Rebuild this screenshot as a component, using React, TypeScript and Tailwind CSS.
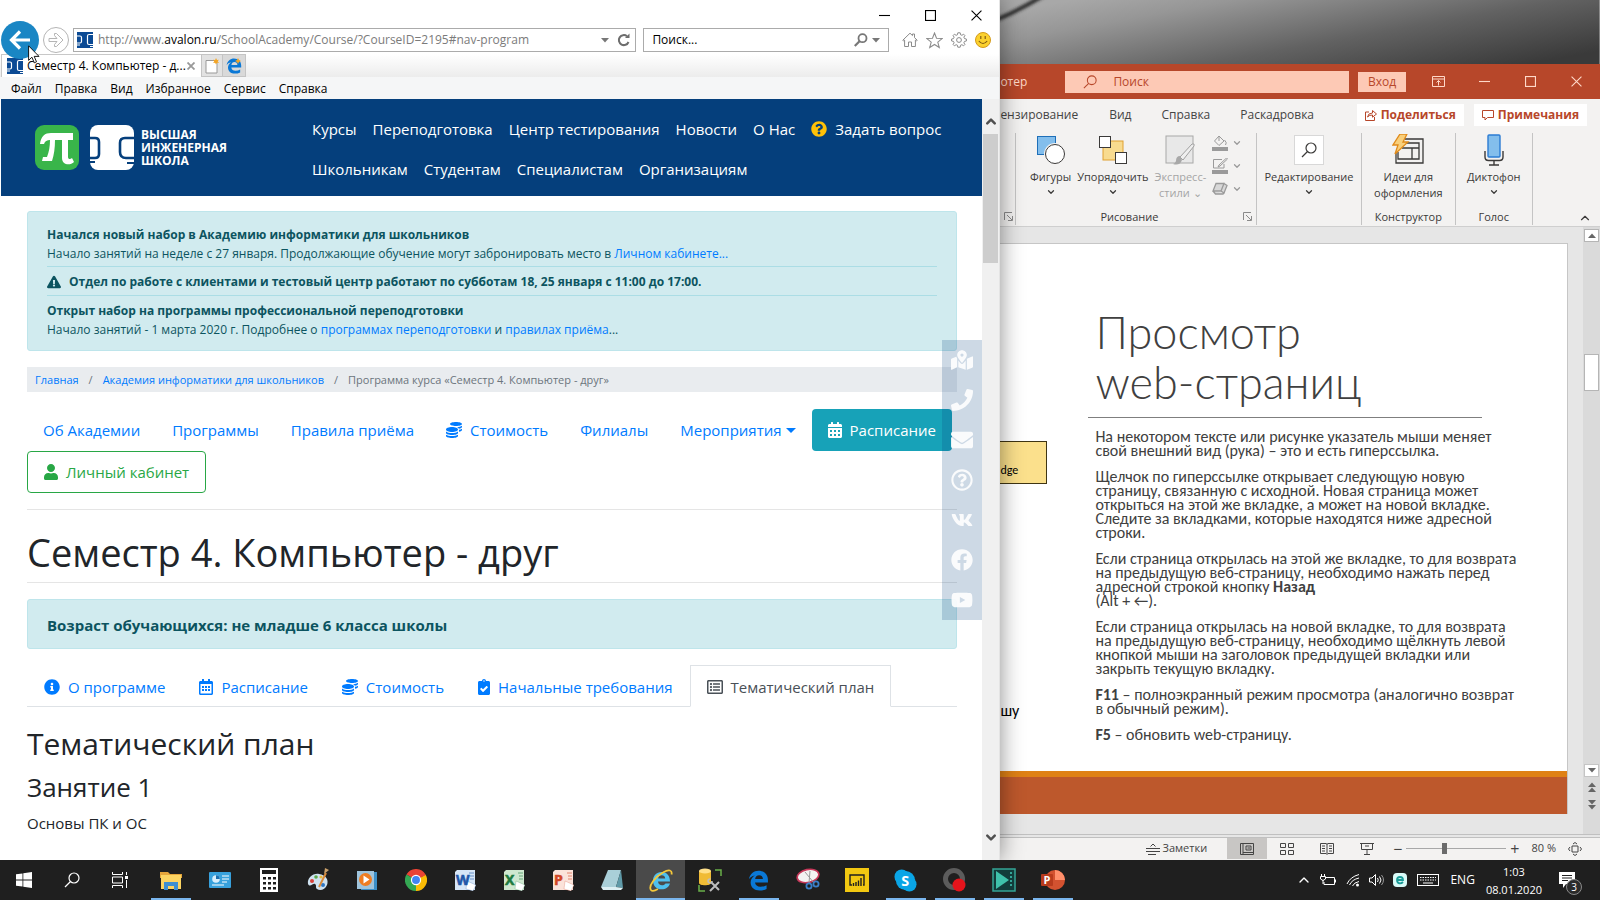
import React, { useState } from 'react';
import {
  FaCalendarAlt, FaClipboardCheck, FaCoins, FaEnvelope, FaExclamationTriangle, FaFacebook,
  FaInfoCircle, FaMapMarkedAlt, FaPhone, FaQuestionCircle, FaRegCalendarAlt, FaRegListAlt,
  FaRegQuestionCircle, FaUser, FaVk, FaYoutube,
} from 'react-icons/fa';
import { ChevronDown, ChevronUp } from 'lucide-react';

const PAGE_URL = 'http://www.avalon.ru/SchoolAcademy/Course/?CourseID=2195#nav-program';

/* ---------- Small shared drawings ---------- */

const Favicon = () => (
  <svg viewBox="0 0 16 16" className="h-4 w-4 shrink-0" fill="none">
    <rect width="16" height="16" fill="#0b4a94" />
    <path d="M0 4h3q1.500 0 1.500 1.500v4q0 1.500-1.500 1.500H0M16 2.500h-4q-1.500 0-1.500 1.500v7q0 1.500 1.500 1.500h4M0 13h3M13 14.500h3" stroke="#fff" strokeWidth="1.200" />
  </svg>
);

const SmallArrow = ({ className = '' }: { className?: string }) => (
  <svg viewBox="0 0 8 5" className={`h-[5px] w-2 shrink-0 ${className}`} fill="currentColor">
    <path d="M0 0h8L4 4.500z" />
  </svg>
);

const WindowGlyph = ({ kind }: { kind: 'min' | 'max' | 'close' }) => (
  <svg viewBox="0 0 10 10" className="h-[11px] w-[11px]" fill="none" stroke="currentColor">
    {kind === 'min' && <path d="M0 5h10" />}
    {kind === 'max' && <rect x=".5" y=".5" width="9" height="9" />}
    {kind === 'close' && <path d="M.5 .5l9 9M9.500 .5l-9 9" />}
  </svg>
);

/* ---------- Browser chrome ---------- */

const AddressRow = () => {
  const [editing, setEditing] = useState(false);
  const [url, setUrl] = useState(PAGE_URL);

  return (
    <div className="relative flex h-6 items-center gap-1 pl-px pr-2">
      <button aria-label="Назад" className="relative z-10 -my-2 flex h-[38px] w-[38px] shrink-0 items-center justify-center rounded-full bg-[#1a86c4]">
        <svg viewBox="0 0 24 24" className="h-6 w-6" fill="none" stroke="#fff" strokeWidth="3.2">
          <path d="M22 12H4M12 3.500L3.500 12l8.500 8.500" />
        </svg>
      </button>
      <button aria-label="Вперёд" className="flex h-[26px] w-[26px] shrink-0 items-center justify-center rounded-full border border-[#b5b5b5] text-[#b5b5b5]">
        <svg viewBox="0 0 16 16" className="h-4 w-4" fill="none" stroke="currentColor">
          <path d="M1 6.500h8L6.500 3.500V1.500h2L15 8l-6.500 6.500h-2v-2L9 9.500H1z" />
        </svg>
      </button>
      <div className="flex h-6 min-w-0 flex-1 items-center border border-[#ababab] bg-white pl-[3px] pr-1">
        <Favicon />
        <div className="relative ml-[5px] min-w-0 flex-1 text-[12px]">
          {!editing && (
            <span className="block truncate text-[#7b7b7b]">
              http://www.<span className="text-black">avalon.ru</span>/SchoolAcademy/Course/?CourseID=2195#nav-program
            </span>
          )}
          <input
            aria-label="Адрес"
            value={editing ? url : ''}
            onChange={(e) => setUrl(e.target.value)}
            onFocus={() => setEditing(true)}
            onBlur={() => setEditing(false)}
            className={editing ? 'block w-full outline-none' : 'absolute inset-0 w-full bg-transparent outline-none'}
          />
        </div>
        <SmallArrow className="mr-2 text-[#777]" />
        <button aria-label="Обновить">
          <svg viewBox="0 0 14 14" className="h-[14px] w-[14px]" fill="none" stroke="#6d6d6d" strokeWidth="2">
            <path d="M11.500 9A5 5 0 1 1 10 3.200" />
            <path d="M8 5h4.500V.5z" fill="#6d6d6d" stroke="none" />
          </svg>
        </button>
      </div>
      <div className="ml-[3px] flex h-6 w-[246px] items-center border border-[#ababab] bg-white px-2">
        <input aria-label="Поиск" defaultValue="Поиск..." className="min-w-0 flex-1 text-[12px] text-black outline-none" />
        <svg viewBox="0 0 14 14" className="h-[14px] w-[14px]" fill="none" stroke="#777" strokeWidth="1.8">
          <circle cx="8.500" cy="5.200" r="4" />
          <path d="M5.500 8.200L.8 13" strokeWidth="2.200" />
        </svg>
        <SmallArrow className="ml-1 text-[#777]" />
      </div>
      <div className="ml-[9px] flex items-center gap-2">
        <button aria-label="Домашняя страница">
          <svg viewBox="0 0 16 16" className="h-4 w-4" fill="none" stroke="#8b8b8b">
            <path d="M.8 8.200L8 1.200l2.500 2.400V2h2v3.600l2.700 2.600-.8.8-1-.9v6.400H9.500V10h-3v4.500H2.600V8.100l-1 .9z" />
          </svg>
        </button>
        <button aria-label="Избранное">
          <svg viewBox="0 0 16 16" className="h-[17px] w-[17px]" fill="none" stroke="#8b8b8b">
            <path d="M8 1l1.900 4.900 5.300.3-4.100 3.300 1.400 5.100L8 11.700l-4.500 2.900 1.400-5.100L.8 6.200l5.300-.3z" />
          </svg>
        </button>
        <button aria-label="Сервис">
          <svg viewBox="0 0 16 16" className="h-4 w-4" fill="none" stroke="#8b8b8b">
            <path d="M6.800.8h2.400l.4 2 1.300.5 1.700-1.100 1.300 1.300-1 1.700.6 1.400 1.900.4v2l-1.900.4-.6 1.400 1 1.700-1.300 1.300-1.700-1.100-1.300.5-.4 2H6.800l-.4-2-1.300-.5-1.700 1.100-1.300-1.300 1-1.700-.6-1.400L.6 9V7l1.900-.4.6-1.400-1-1.700 1.300-1.300 1.700 1.100 1.300-.5z" />
            <circle cx="8" cy="8" r="2.400" />
          </svg>
        </button>
        <button aria-label="Отзыв">
          <svg viewBox="0 0 16 16" className="h-4 w-4">
            <circle cx="8" cy="8" r="7.500" fill="#fbd12e" stroke="#d49a1a" />
            <path d="M5.800 4v3M10.200 4v3M3.800 9q4.200 5 8.400 0" fill="none" stroke="#7a5410" strokeWidth="1.100" />
          </svg>
        </button>
      </div>
      <svg viewBox="0 0 12 19" className="absolute left-[28px] top-[17px] z-20 h-[19px] w-3">
        <path d="M.6.800v14.600l3.300-3.200 2.400 5.600 2.200-1-2.300-5.400h4.800z" fill="#fff" stroke="#000" strokeWidth=".9" />
      </svg>
    </div>
  );
};

const EdgeLogo = ({ className }: { className: string }) => (
  <svg viewBox="0 0 20 20" className={className}>
    <path
      d="M.8 9C1.800 3.500 5.500.600 10 .600c5.600 0 9 3.700 9 9V12H6.700c.2 2.600 2.300 4 5.200 4 2.200 0 4-.5 5.800-1.500V18c-2 1-4.200 1.500-6.500 1.500-5.300 0-8.700-2.900-8.700-7.600 0-3 1.600-5.300 4-6.700C3.700 5.700 1.800 7 .8 9zm6-.4h7.400c0-2.300-1.300-3.700-3.600-3.700-2.100 0-3.600 1.400-3.800 3.700z"
      fill="#0a78d6"
    />
  </svg>
);

const TabRow = () => (
  <div className="mt-[2px] flex h-[23px] bg-linear-to-b from-white to-[#ececec]">
    <div className="ml-px flex w-[200px] items-center border-l border-t border-[#c8c8c8] bg-white pl-[5px] pr-[6px]">
      <Favicon />
      <span className="ml-1 flex-1 truncate text-[12px] text-black">Семестр 4. Компьютер - д...</span>
      <button aria-label="Закрыть вкладку">
        <svg viewBox="0 0 8 8" className="h-2 w-2" stroke="#999" strokeWidth="1.800">
          <path d="M.5.5l7 7M7.500.5l-7 7" />
        </svg>
      </button>
    </div>
    <button aria-label="Новая вкладка" className="flex w-[22px] items-center justify-center border border-[#c4c4c4] bg-[#e2e2e2]">
      <svg viewBox="0 0 14 16" className="h-4 w-[14px]">
        <path d="M1 2.500h8l3 3V15H1z" fill="#fff" stroke="#999" />
        <path d="M11 0l1 2 2-.3-1.300 1.600L14 5l-2-.2L11 6.500l-.9-1.800L8 5l1.300-1.600L8 1.800l2.100.2z" fill="#f3a526" />
      </svg>
    </button>
    <button aria-label="Открыть в Edge" className="relative flex w-[23px] items-center justify-center border border-l-0 border-[#c4c4c4] bg-[#d9d9d9]">
      <EdgeLogo className="h-4 w-4" />
      <svg viewBox="0 0 6 6" className="absolute right-1 top-[3px] h-[6px] w-[6px]">
        <path d="M3 0l1 2 2 1-2 1-1 2-1-2-2-1 2-1z" fill="#f3a526" />
      </svg>
    </button>
  </div>
);

const menuItems = ['Файл', 'Правка', 'Вид', 'Избранное', 'Сервис', 'Справка'];

/* ---------- Web page ---------- */

const navTop = ['Курсы', 'Переподготовка', 'Центр тестирования', 'Новости', 'О Нас'];
const navBottom = ['Школьникам', 'Студентам', 'Специалистам', 'Организациям'];

const SiteHeader = () => (
  <header className="flex h-[97px] shrink-0 bg-[#053f7c] pl-[34px] text-white">
    <a href="#home" className="flex w-[277px] items-center">
      <svg viewBox="0 0 44 45" className="h-[45px] w-11">
        <rect width="44" height="45" rx="9" fill="#39b54a" />
        <path
          d="M5 19C6 11 10 8 16 8h22v7h-5v17c0 2 2 3 4 1l2 4c-4 4-12 3-12-4V15h-7c0 8-1 15-3 21H7l1-4h4c2-5 3-11 3-17-3 0-5 1-6 4z"
          fill="#fff"
        />
      </svg>
      <svg viewBox="0 0 44 45" className="ml-[11px] h-[45px] w-11" fill="none">
        <rect width="44" height="45" rx="8" fill="#fff" />
        <path d="M0 13h5q4 0 4 4v12q0 4-4 4H0M44 13h-9q-5 0-5 5v9q0 6 6 6h8" stroke="#053f7c" strokeWidth="2.600" />
        <path d="M0 36h5v2H0zM37 37h7v2h-7z" fill="#053f7c" />
      </svg>
      <span className="ml-[7px] text-[12px] font-bold uppercase leading-[13px]">
        Высшая<br />инженерная<br />школа
      </span>
    </a>
    <nav className="flex flex-col pt-[10px] text-[15px]">
      <div className="flex h-10 items-center gap-4">
        {navTop.map((label) => (
          <a key={label} href="#nav">{label}</a>
        ))}
        <a href="#ask" className="flex items-center gap-2">
          <FaQuestionCircle className="h-4 w-4 text-[#ffc107]" />
          Задать вопрос
        </a>
      </div>
      <div className="flex h-10 items-center gap-4">
        {navBottom.map((label) => (
          <a key={label} href="#nav">{label}</a>
        ))}
      </div>
    </nav>
  </header>
);

const Announcements = () => (
  <section className="rounded-[3px] border border-[#bee5eb] bg-[#d1ebef] px-[19px] pb-[11px] pt-[13px] text-[12px] leading-[19px] text-[#0c5460]">
    <p className="font-bold">Начался новый набор в Академию информатики для школьников</p>
    <p>
      Начало занятий на неделе с 27 января. Продолжающие обучение могут забронировать место в{' '}
      <a href="#account" className="text-[#007bff]">Личном кабинете...</a>
    </p>
    <hr className="mb-[5px] mt-[3px] border-[#abdde5]" />
    <p className="flex items-center gap-2 font-bold">
      <FaExclamationTriangle className="h-[14px] w-[14px]" />
      Отдел по работе с клиентами и тестовый центр работают по субботам 18, 25 января с 11:00 до 17:00.
    </p>
    <hr className="mb-[5px] mt-1 border-[#abdde5]" />
    <p className="font-bold">Открыт набор на программы профессиональной переподготовки</p>
    <p>
      Начало занятий - 1 марта 2020 г. Подробнее о <a href="#programs" className="text-[#007bff]">программах переподготовки</a> и{' '}
      <a href="#rules" className="text-[#007bff]">правилах приёма</a>...
    </p>
  </section>
);

const SectionNav = () => (
  <nav className="mt-[17px] flex flex-wrap text-[15px] text-[#007bff]">
    {['Об Академии', 'Программы', 'Правила приёма'].map((label) => (
      <a key={label} href="#section" className="flex h-[42px] items-center px-4">{label}</a>
    ))}
    <a href="#price" className="flex h-[42px] items-center gap-2 px-4"><FaCoins className="h-4 w-4" />Стоимость</a>
    <a href="#branches" className="flex h-[42px] items-center px-4">Филиалы</a>
    <a href="#events" className="flex h-[42px] items-center gap-1 px-4">
      Мероприятия
      <svg viewBox="0 0 10 5" className="h-[5px] w-[10px]" fill="currentColor"><path d="M0 0h10L5 5z" /></svg>
    </a>
    <a href="#schedule" className="flex h-[42px] items-center gap-2 rounded-[4px] bg-[#17a2b8] px-4 text-white">
      <FaCalendarAlt className="h-4 w-[14px]" />Расписание
    </a>
    <div className="w-full">
      <a href="#account" className="inline-flex h-[42px] items-center gap-2 rounded-[4px] border border-[#28a745] px-4 text-[#28a745]">
        <FaUser className="h-4 w-[14px]" />Личный кабинет
      </a>
    </div>
  </nav>
);

const courseTabs = [
  { label: 'О программе', icon: <FaInfoCircle className="h-4 w-4" /> },
  { label: 'Расписание', icon: <FaRegCalendarAlt className="h-4 w-[14px]" /> },
  { label: 'Стоимость', icon: <FaCoins className="h-4 w-4" /> },
  { label: 'Начальные требования', icon: <FaClipboardCheck className="h-4 w-3" /> },
  { label: 'Тематический план', icon: <FaRegListAlt className="h-4 w-4" /> },
];

const CourseTabs = () => {
  const [active, setActive] = useState('Тематический план');

  return (
    <div role="tablist" className="mt-4 flex border-b border-[#dee2e6] text-[15px]">
      {courseTabs.map(({ label, icon }) => (
        <button
          key={label}
          role="tab"
          aria-selected={active === label}
          onClick={() => setActive(label)}
          className={
            active === label
              ? '-mb-px flex h-[42px] items-center gap-2 border border-b-white border-[#dee2e6] bg-white px-4 pt-[2px] text-[#495057]'
              : '-mb-px flex h-[42px] items-center gap-2 border border-transparent px-4 pt-[2px] text-[#007bff]'
          }
        >
          {icon}
          {label}
        </button>
      ))}
    </div>
  );
};

const contactLinks = [
  { label: 'Карта', icon: <FaMapMarkedAlt /> },
  { label: 'Телефон', icon: <FaPhone /> },
  { label: 'Почта', icon: <FaEnvelope /> },
  { label: 'Вопрос', icon: <FaRegQuestionCircle /> },
  { label: 'ВКонтакте', icon: <FaVk /> },
  { label: 'Facebook', icon: <FaFacebook /> },
  { label: 'YouTube', icon: <FaYoutube /> },
];

const BrowserWindow = () => (
  <section className="relative z-10 flex min-w-0 flex-[5] flex-col overflow-hidden border-r border-[#e4e4e4] bg-white shadow-[0_0_22px_rgba(0,0,0,0.45)]">
    <div className="flex h-7 shrink-0 items-end justify-end pb-[7px] text-black">
      <button aria-label="Свернуть" className="flex w-[45px] justify-center"><WindowGlyph kind="min" /></button>
      <button aria-label="Развернуть" className="flex w-[46px] justify-center"><WindowGlyph kind="max" /></button>
      <button aria-label="Закрыть" className="flex w-[46px] justify-center"><WindowGlyph kind="close" /></button>
    </div>
    <AddressRow />
    <TabRow />
    <div className="flex h-[22px] shrink-0 items-center gap-[13px] bg-[#f5f6f7] pl-[11px] pt-[2px] text-[12px] text-black">
      {menuItems.map((item) => (
        <button key={item}>{item}</button>
      ))}
    </div>

    <div className="flex min-h-0 flex-1 pl-px">
      <div className="relative flex min-w-0 flex-1 flex-col overflow-hidden">
        <SiteHeader />
        <main className="pl-[26px] pr-[25px] pt-[15px] text-[#212529]">
          <Announcements />
          <nav aria-label="breadcrumb" className="mt-4 flex h-[25px] items-center gap-[10px] bg-[#e9ecef] px-2 pt-px text-[11px] text-[#6c757d]">
            <a href="#main" className="text-[#007bff]">Главная</a>
            <span>/</span>
            <a href="#academy" className="text-[#007bff]">Академия информатики для школьников</a>
            <span>/</span>
            <span>Программа курса «Семестр 4. Компьютер - друг»</span>
          </nav>
          <SectionNav />
          <hr className="mt-4 border-[#e5e5e5]" />
          <h1 className="mt-[18px] text-[38px] leading-[48px]">Семестр 4. Компьютер - друг</h1>
          <hr className="mt-[6px] border-[#e5e5e5]" />
          <p className="mt-4 flex h-[50px] items-center rounded-[3px] border border-[#bee5eb] bg-[#d1ebef] px-[19px] pt-[2px] text-[15px] font-bold text-[#0c5460]">
            Возраст обучающихся: не младше 6 класса школы
          </p>
          <CourseTabs />
          <h2 className="mt-[18px] text-[30px] leading-[38px]">Тематический план</h2>
          <h3 className="mt-2 text-[26px] leading-8">Занятие 1</h3>
          <p className="mt-2 text-[15px] leading-6">Основы ПК и ОС</p>
        </main>
        <aside className="absolute right-0 top-[241px] flex w-10 flex-col bg-[#053f7c]/20 text-[22px] text-white/90">
          {contactLinks.map(({ label, icon }) => (
            <a key={label} href="#contact" aria-label={label} className="flex h-10 items-center justify-center">{icon}</a>
          ))}
        </aside>
      </div>
      <div className="flex w-[17px] shrink-0 flex-col items-center bg-[#f0f0f0] text-[#505050]">
        <ChevronUp className="mb-[5px] mt-[15px] h-[15px] w-4" strokeWidth={4} />
        <div className="h-[129px] w-[15px] bg-[#cdcdcd]" />
        <ChevronDown className="mb-[15px] mt-auto h-[15px] w-4" strokeWidth={4} />
      </div>
    </div>
  </section>
);

/* ---------- Presentation editor ---------- */

const TinyChevron = () => <ChevronDown className="h-[10px] w-[10px]" strokeWidth={3} />;

const RibbonButton = ({ label, icon, disabled, arrow = true }: { label: React.ReactNode; icon: React.ReactNode; disabled?: boolean; arrow?: boolean }) => (
  <button disabled={disabled} className={disabled ? 'flex flex-col items-center text-[#a5a5a5]' : 'flex flex-col items-center text-[#3b3a39]'}>
    <span className="flex h-[34px] items-center">{icon}</span>
    <span className="mt-[2px] leading-4">{label}</span>
    {arrow && <span className="mt-[2px]"><TinyChevron /></span>}
  </button>
);

const ShapesIcon = () => (
  <svg viewBox="0 0 30 30" className="h-[30px] w-[30px]">
    <rect x="1.500" y="1.500" width="18" height="18" fill="#83beec" stroke="#1e6fb8" />
    <circle cx="19" cy="19" r="11" fill="#f3f2f1" />
    <circle cx="19" cy="19" r="9.500" fill="#fff" stroke="#3b3a39" />
  </svg>
);

const ArrangeIcon = () => (
  <svg viewBox="0 0 30 30" className="h-[30px] w-[30px]">
    <rect x="5" y="6" width="20" height="19" fill="#f8db8f" stroke="#e0a030" />
    <rect x="1.500" y="1.500" width="11" height="11" fill="#fff" stroke="#3b3a39" />
    <rect x="17.500" y="17.500" width="11" height="11" fill="#fff" stroke="#3b3a39" />
  </svg>
);

const StylesIcon = () => (
  <svg viewBox="0 0 30 32" className="h-8 w-[30px]">
    <rect x="1" y="2" width="27" height="27" fill="#e8e8e8" stroke="#a8a8a8" />
    <path d="M29 12L18 26l-3-3L27 10q3-1 2 2z" fill="#eee" stroke="#a0a0a0" />
    <path d="M15 22q-4 0-4 5-1 3-3 3 7 2 9-4z" fill="#a8a8a8" />
  </svg>
);

const IdeasIcon = () => (
  <svg viewBox="0 0 32 32" className="h-8 w-8" fill="none" stroke="#3b3a39" strokeWidth="1.300">
    <path d="M13 5h18v24H4V18M10 9h17v16H6v-7M10 14h17M20 14v11" />
    <path d="M8 0h7l-4 8h5L3 20l3-9H1z" fill="#f8cf7b" stroke="#e08a1a" />
  </svg>
);

const MicIcon = () => (
  <svg viewBox="0 0 22 32" className="h-8 w-[22px]" fill="none" stroke="#3b3a39" strokeWidth="1.400">
    <rect x="5" y="1" width="12" height="22" rx="1" fill="#83beec" stroke="#2b7cd3" />
    <path d="M2 17v6q0 3.500 3.500 3.500h11q3.500 0 3.500-3.500v-6M11 27v4M6 31h10" />
  </svg>
);

const Magnifier = ({ className }: { className: string }) => (
  <svg viewBox="0 0 16 16" className={className} fill="none" stroke="currentColor" strokeWidth="1.200">
    <circle cx="10" cy="6" r="5" />
    <path d="M6.500 9.500L1 15" />
  </svg>
);

const Launcher = () => (
  <svg viewBox="0 0 9 9" className="h-[9px] w-[9px]" fill="none" stroke="#8a8a8a">
    <path d="M.5 8V.5H8M3 3l5 5M8.500 4v4.500H4" />
  </svg>
);

const RibbonTools = () => (
  <div className="flex flex-col gap-[7px] pt-[2px] text-[#9a9a9a]">
    <span className="flex items-center gap-1">
      <svg viewBox="0 0 16 16" className="h-4 w-4" fill="none" stroke="currentColor">
        <path d="M7 1L2.500 6 7 10.500 12 6zM7 1v5M12.500 5q3 3 1 5" /><path d="M0 12h16v4H0z" fill="currentColor" stroke="none" />
      </svg>
      <TinyChevron />
    </span>
    <span className="flex items-center gap-1">
      <svg viewBox="0 0 16 16" className="h-4 w-4" fill="none" stroke="currentColor">
        <path d="M10 1.500H1.500V10H12V6M14.500 0L7 7l-1 2 2-1 7.500-7z" /><path d="M0 12h16v4H0z" fill="currentColor" stroke="none" />
      </svg>
      <TinyChevron />
    </span>
    <span className="flex items-center gap-1">
      <svg viewBox="0 0 16 16" className="h-4 w-4" fill="none" stroke="currentColor" strokeWidth="1.300">
        <path d="M4 2.500h8L9 10H1zM12 2.500l3 2L12 12l-3-2zM1 10l2.500 3H11l1-1" fill="#d8d8d8" />
      </svg>
      <TinyChevron />
    </span>
  </div>
);

const Ribbon = () => (
  <div className="flex h-[98px] shrink-0 items-stretch border-b border-[#cfcfcf] bg-[#f3f2f1] pb-px pt-1 text-[11px] text-[#3b3a39]">
    <div className="flex w-4 items-end justify-start border-r border-[#c4c4c4] pb-1 pl-1"><Launcher /></div>
    <div className="flex flex-[241] flex-col border-r border-[#c4c4c4]">
      <div className="flex flex-1 items-start justify-center gap-[6px]">
        <RibbonButton label="Фигуры" icon={<ShapesIcon />} />
        <RibbonButton label="Упорядочить" icon={<ArrangeIcon />} />
        <RibbonButton label={<>Экспресс-<br />стили ⌄</>} icon={<StylesIcon />} disabled arrow={false} />
        <RibbonTools />
      </div>
      <div className="flex items-center justify-between pl-[84px] pr-1"><span>Рисование</span><Launcher /></div>
    </div>
    <div className="flex flex-[105] justify-center border-r border-[#c4c4c4]">
      <RibbonButton
        label="Редактирование"
        icon={<span className="flex h-[30px] w-[30px] items-center justify-center border border-[#d8d8d8] bg-white"><Magnifier className="h-4 w-4" /></span>}
      />
    </div>
    <div className="flex flex-[93] flex-col items-center justify-between border-r border-[#c4c4c4]">
      <RibbonButton label={<>Идеи для<br />оформления</>} icon={<IdeasIcon />} arrow={false} />
      <span>Конструктор</span>
    </div>
    <div className="flex flex-[77] flex-col items-center justify-between border-r border-[#c4c4c4]">
      <RibbonButton label="Диктофон" icon={<MicIcon />} />
      <span>Голос</span>
    </div>
    <div className="flex w-[67px] shrink-0 items-end justify-end pr-2"><ChevronUp className="h-[14px] w-[14px]" /></div>
  </div>
);

const slideText: React.ReactNode[][] = [
  ['На некотором тексте или рисунке указатель мыши меняет', 'свой внешний вид (рука) – это и есть гиперссылка.'],
  [
    'Щелчок по гиперссылке открывает следующую новую',
    'страницу, связанную с исходной. Новая страница может',
    'открыться на этой же вкладке, а может на новой вкладке.',
    'Следите за вкладками, которые находятся ниже адресной',
    'строки.',
  ],
  [
    'Если страница открылась на этой же вкладке, то для возврата',
    'на предыдущую веб-страницу, необходимо нажать перед',
    <>адресной строкой кнопку <b>Назад</b></>,
    '(Alt + ←).',
  ],
  [
    'Если страница открылась на новой вкладке, то для возврата',
    'на предыдущую веб-страницу, необходимо щёлкнуть левой',
    'кнопкой мыши на заголовок предыдущей вкладки или',
    'закрыть текущую вкладку.',
  ],
  [<><b>F11</b> – полноэкранный режим просмотра (аналогично возврат</>, 'в обычный режим).'],
  [<><b>F5</b> – обновить web-страницу.</>],
];

const Slide = () => (
  <article className="flex flex-1 flex-col border-r border-t border-[#c6c6c6] bg-white font-['Carlito','Lato',sans-serif] text-[#404040]">
    <div className="flex flex-1">
      <div className="flex w-[47px] shrink-0 flex-col pt-[197px] text-[12px] text-black">
        <div className="flex h-[43px] items-end border border-l-0 border-[#3f3513] bg-[#fbe08c] pb-1">dge</div>
        <span className="mt-[217px] text-[16px] leading-5">шу</span>
      </div>
      <div className="ml-[41px] w-[420px]">
        <h2 className="mr-[26px] border-b border-[#7f7f7f] pb-[10px] pl-[7px] pt-[63px] font-['Lato',sans-serif] text-[45px] font-light leading-[50px]">
          Просмотр<br />web-страниц
        </h2>
        <div className="flex flex-col gap-3 whitespace-nowrap pl-[7px] pt-3 text-[16px] leading-[14px]">
          {slideText.map((lines, i) => (
            <p key={i}>
              {lines.map((line, j) => (
                <span key={j} className="block">{line}</span>
              ))}
            </p>
          ))}
        </div>
      </div>
    </div>
    <div className="h-[43px] border-t-[6px] border-[#df8116] bg-[#bd582c]" />
  </article>
);

const StatusBar = () => (
  <footer className="flex h-[23px] shrink-0 items-center justify-end border-t border-[#c0c0c0] bg-[#f3f2f1] pb-px pr-[18px] text-[11px] text-[#444]">
    <button className="flex items-center gap-[3px]">
      <svg viewBox="0 0 14 12" className="h-3 w-[14px]" fill="none" stroke="currentColor">
        <path d="M0 5.500h14M0 8.500h14M2 11.500h8M4.500 3.500L7 1l2.500 2.500" />
      </svg>
      Заметки
    </button>
    <button aria-label="Обычный" className="ml-5 flex h-[21px] w-10 items-center justify-center bg-[#c8c6c4]">
      <svg viewBox="0 0 14 12" className="h-3 w-[14px]" fill="none" stroke="currentColor">
        <path d="M.5.5h13v11H.5zM3 .5v11M3 9.500h10M6 3h5v4H6zM7.500 5H10" />
      </svg>
    </button>
    <button aria-label="Сортировщик слайдов" className="flex w-10 justify-center">
      <svg viewBox="0 0 14 12" className="h-3 w-[14px]" fill="none" stroke="currentColor">
        <path d="M.5.5h5v4h-5zM8.500.5h5v4h-5zM.5 7.500h5v4h-5zM8.500 7.500h5v4h-5z" />
      </svg>
    </button>
    <button aria-label="Режим чтения" className="flex w-10 justify-center">
      <svg viewBox="0 0 14 12" className="h-3 w-[14px]" fill="none" stroke="currentColor">
        <path d="M.5.5H6l1 .7 1-.7h5.500v10H8l-1 1-1-1H.5zM7 1v10M2 3h3M2 5.500h3M2 8h3M9 3h3M9 5.500h3M9 8h3" />
      </svg>
    </button>
    <button aria-label="Показ слайдов" className="flex w-10 justify-center">
      <svg viewBox="0 0 14 12" className="h-3 w-[14px]" fill="none" stroke="currentColor">
        <path d="M0 .5h14M1.500.5v6h11v-6M5 3h4M7 6.500v5M4 11.500h6" />
      </svg>
    </button>
    <button aria-label="Уменьшить" className="ml-[6px] text-[16px] leading-none">−</button>
    <input
      type="range"
      aria-label="Масштаб"
      min={0}
      max={100}
      defaultValue={38}
      className="mx-1 h-px w-[100px] appearance-none bg-[#a8a8a8] [&::-webkit-slider-thumb]:h-[11px] [&::-webkit-slider-thumb]:w-[5px] [&::-webkit-slider-thumb]:appearance-none [&::-webkit-slider-thumb]:bg-[#6b6b6b]"
    />
    <button aria-label="Увеличить" className="text-[16px] leading-none">+</button>
    <span className="ml-3 whitespace-nowrap">80 %</span>
    <button aria-label="По размеру окна" className="ml-3">
      <svg viewBox="0 0 14 14" className="h-[14px] w-[14px]" fill="none" stroke="currentColor">
        <path d="M4 4h6v6H4zM5 2l2-1.500L9 2M5 12l2 1.500L9 12M2 5L.5 7 2 9M12 5l1.500 2L12 9" />
      </svg>
    </button>
  </footer>
);

const PresentationWindow = () => (
  <section className="flex min-w-0 flex-[3] flex-col bg-[#e6e6e6]">
    <svg viewBox="0 0 600 64" preserveAspectRatio="none" className="h-16 w-full shrink-0">
      <defs>
        <linearGradient id="wall" x1="0" y1="0.2" x2="1" y2="0.8">
          <stop offset="0" stopColor="#a8a8a8" />
          <stop offset=".2" stopColor="#969696" />
          <stop offset=".6" stopColor="#626262" />
          <stop offset="1" stopColor="#3a3a3a" />
        </linearGradient>
        <filter id="soft"><feGaussianBlur stdDeviation="1.5" /></filter>
      </defs>
      <rect width="600" height="64" fill="url(#wall)" />
      <path d="M-4 20Q20 10 46-6" fill="none" stroke="#2b2b2b" strokeWidth="4" filter="url(#soft)" />
    </svg>
    <div className="flex h-[35px] shrink-0 items-center bg-[#b7472a] text-[12px] text-[#ffd9c9]">
      <span className="w-[65px]">отер</span>
      <label className="flex h-[22px] flex-1 items-center gap-4 bg-[#fdc9b5] pl-[18px] text-[#b7472a]">
        <Magnifier className="h-[14px] w-[14px]" />
        <input aria-label="Поиск" defaultValue="Поиск" className="min-w-0 flex-1 text-[12px] outline-none" />
      </label>
      <button className="ml-[9px] flex h-[20px] w-12 items-center justify-center bg-[#fdc9b5] text-[#b7472a]">Вход</button>
      <button aria-label="Параметры ленты" className="ml-[9px] flex w-[46px] justify-center">
        <svg viewBox="0 0 13 11" className="h-[11px] w-[13px]" fill="none" stroke="currentColor">
          <path d="M.5.5h12v10H.5zM.5 3h12M6.500 9.500v-5M4.500 6.500l2-2 2 2" />
        </svg>
      </button>
      <button aria-label="Свернуть окно" className="flex w-[46px] justify-center"><WindowGlyph kind="min" /></button>
      <button aria-label="Развернуть окно" className="flex w-[46px] justify-center"><WindowGlyph kind="max" /></button>
      <button aria-label="Закрыть окно" className="flex w-[47px] justify-center"><WindowGlyph kind="close" /></button>
    </div>
    <div className="flex h-[30px] shrink-0 items-center bg-[#f3f2f1] pr-[13px] pt-px text-[12px] text-[#444]">
      <button>ензирование</button>
      <button className="ml-[31px]">Вид</button>
      <button className="ml-[30px]">Справка</button>
      <button className="ml-[30px]">Раскадровка</button>
      <button className="ml-auto flex h-[22px] items-center gap-1 bg-white px-2 font-bold text-[#b7472a]">
        <svg viewBox="0 0 12 12" className="h-3 w-3" fill="none" stroke="currentColor">
          <path d="M4 3H.5v8.500h9V8M2.500 8q.5-4 5-4V1.500L11.500 5 7.500 8.200V6q-3-.2-5 2z" />
        </svg>
        Поделиться
      </button>
      <button className="ml-[10px] flex h-[22px] items-center gap-1 bg-white px-2 font-bold text-[#b7472a]">
        <svg viewBox="0 0 12 12" className="h-3 w-3" fill="none" stroke="currentColor">
          <path d="M.5 1.500h11v7H5.500L3 11V8.500H.5z" />
        </svg>
        Примечания
      </button>
    </div>
    <Ribbon />
    <div className="flex min-h-0 flex-1">
      <div className="flex min-w-0 flex-1 flex-col pb-5 pt-4"><Slide /></div>
      <div className="ml-[15px] flex w-[17px] shrink-0 flex-col items-center bg-[#dadada] pb-6 pt-[2px] text-[#666]">
        <span className="flex h-[13px] w-[15px] items-center justify-center border border-[#b5b5b5] bg-white">
          <SmallArrow className="rotate-180" />
        </span>
        <div className="mt-28 h-[37px] w-[15px] border border-[#b5b5b5] bg-white" />
        <span className="mb-[5px] mt-auto flex h-[13px] w-[15px] items-center justify-center border border-[#c5c5c5] bg-white">
          <SmallArrow />
        </span>
        <SmallArrow className="rotate-180" />
        <SmallArrow className="mb-2 rotate-180" />
        <SmallArrow />
        <SmallArrow />
      </div>
    </div>
    <div className="h-[3px] shrink-0 border-t border-[#c0c0c0]" />
    <StatusBar />
  </section>
);

/* ---------- Taskbar ---------- */

const OfficeDoc = ({ letter, color, tint }: { letter: string; color: string; tint: string }) => (
  <svg viewBox="0 0 22 22" className="h-[22px] w-[22px]">
    <path d="M3 1h18v20H1V3z" fill={tint} />
    <path d="M13 12l9 4-3 6-7-2z" fill="#fff" stroke={color} strokeOpacity=".4" strokeWidth=".6" />
    <path d="M15 4h5M16 7h4M16 10h4" stroke={color} opacity=".6" />
    <text x="2" y="16" fontSize="14" fontWeight="bold" fill={color} stroke={color} strokeWidth=".6">{letter}</text>
  </svg>
);

const taskbarApps = [
  {
    name: 'Проводник', state: 'open', icon: (
      <svg viewBox="0 0 22 20" className="h-5 w-[22px]">
        <path d="M0 2h8l2 2h12v4H0z" fill="#e5a53a" /><path d="M1 5h20v14H1z" fill="#fcd462" />
        <path d="M4 20v-8h14v8h-4v-4H8v4z" fill="#3d8fd1" />
      </svg>
    ),
  },
  {
    name: 'Система', state: '', icon: (
      <svg viewBox="0 0 22 16" className="h-4 w-[22px]">
        <rect width="22" height="16" rx="1" fill="#38a1dc" /><circle cx="7" cy="7" r="3.800" fill="#d8eefb" /><path d="M7 7V3.200A3.800 3.800 0 0 1 10.800 7z" fill="#1b6fb0" />
        <path d="M13 4h7M13 7h7M13 10h5M3 13h12" stroke="#fff" />
      </svg>
    ),
  },
  {
    name: 'Калькулятор', state: '', icon: (
      <svg viewBox="0 0 18 24" className="h-6 w-[18px]">
        <rect width="18" height="24" fill="#fff" />
        <path d="M2 2h14v4H2zM3 9h3v2.500H3zM8 9h3v2.500H8zM13 9h3v2.500h-3zM3 14h3v2.500H3zM8 14h3v2.500H8zM13 14h3v2.500h-3zM3 19h3v2.500H3zM8 19h3v2.500H8zM13 19h3v2.500h-3z" fill="#1f1f1f" />
      </svg>
    ),
  },
  {
    name: 'Paint', state: '', icon: (
      <svg viewBox="0 0 24 24" className="h-6 w-6">
        <path d="M2 16C1 10 7 5 13 6c7 1 10 6 8 11-2 5-7 6-10 4-2-1 0-4-2-5s-5 4-7 0z" fill="#cfe2f0" />
        <circle cx="6" cy="13" r="2" fill="#d8423a" /><circle cx="10" cy="9" r="1.800" fill="#5ba84a" /><circle cx="15" cy="9" r="1.600" fill="#e9b93b" /><circle cx="17" cy="17" r="2" fill="#2f77c4" />
        <path d="M13 19L20 5" stroke="#d98a3a" strokeWidth="2" /><path d="M18 6l1-6 4 2z" fill="#caa06a" />
      </svg>
    ),
  },
  {
    name: 'Windows Media', state: '', icon: (
      <svg viewBox="0 0 22 20" className="h-5 w-[22px]">
        <rect x="5" y="2" width="16" height="18" fill="#3c8ec6" /><rect x="1" y="1" width="17" height="18" fill="#9fc4dc" />
        <circle cx="9.500" cy="9.500" r="6.500" fill="#ef7d22" /><path d="M7.500 5.500v8l6-4z" fill="#fff" />
      </svg>
    ),
  },
  {
    name: 'Chrome', state: '', icon: (
      <svg viewBox="0 0 24 24" className="h-[22px] w-[22px]">
        <path d="M12 12L1.600 6A12 12 0 0 1 22.400 6z" fill="#ea4335" />
        <path d="M12 12L22.400 6A12 12 0 0 1 12 24z" fill="#fbbc05" />
        <path d="M12 12v12A12 12 0 0 1 1.600 6z" fill="#34a853" />
        <path d="M12 6.500h10.700L12 12z" fill="#ea4335" />
        <circle cx="12" cy="12" r="5.600" fill="#fff" /><circle cx="12" cy="12" r="4.300" fill="#4285f4" />
      </svg>
    ),
  },
  { name: 'Word', state: '', icon: <OfficeDoc letter="W" color="#1f57a8" tint="#d6e6f7" /> },
  { name: 'Excel', state: '', icon: <OfficeDoc letter="X" color="#1e7b3f" tint="#cfe8cf" /> },
  { name: 'PowerPoint Viewer', state: '', icon: <OfficeDoc letter="P" color="#d24625" tint="#fbe3da" /> },
  {
    name: 'Блокнот', state: '', icon: (
      <svg viewBox="0 0 24 22" className="h-[22px] w-6">
        <path d="M8 1h13l-5 17H1z" fill="#a9cfd8" /><path d="M21 1l2 18-7-1z" fill="#5f9aa8" /><path d="M1 18h15l7 1-2 2H3z" fill="#dceff3" />
      </svg>
    ),
  },
  {
    name: 'Internet Explorer', state: 'active', icon: (
      <svg viewBox="0 0 24 24" className="h-6 w-6">
        <path d="M12.500 4c5.500 0 8.500 4 8.500 9.500H9c.3 2.500 1.800 3.800 4 3.800 1.700 0 2.800-.7 3.500-1.800H21c-1.200 3.600-4.200 5.800-8.300 5.800C7.500 21.300 4 17.800 4 12.700 4 7.500 7.500 4 12.500 4zM9.200 10.500h7c-.2-2-1.500-3.200-3.500-3.200s-3.200 1.200-3.500 3.200z" fill="#4fc0ee" />
        <path d="M22.500 6.500C23.500 2 20 1 14 4.500 6.500 8.500-1 18 2 22c1.500 1.800 4.500.5 7-1" fill="none" stroke="#f5c83a" strokeWidth="1.800" />
      </svg>
    ),
  },
  {
    name: 'База данных', state: '', icon: (
      <svg viewBox="0 0 26 24" className="h-6 w-[26px]">
        <path d="M2 3v12c0 3 12 3 12 0V3" fill="#f0bb35" /><ellipse cx="8" cy="3" rx="6" ry="2.500" fill="#ffe08a" />
        <path d="M18 2h6v6M2 17v6h6" fill="none" stroke="#6ab04a" strokeWidth="1.500" />
        <path d="M14 14l8 8M22 14l-9 9" stroke="#bdbdbd" strokeWidth="2" />
        <circle cx="13" cy="13" r="2" fill="none" stroke="#bdbdbd" strokeWidth="1.500" strokeDasharray="9 4" />
      </svg>
    ),
  },
  { name: 'Edge', state: 'open', icon: <EdgeLogo className="h-[21px] w-[21px]" /> },
  {
    name: 'Ножницы', state: '', icon: (
      <svg viewBox="0 0 24 24" className="h-6 w-6" fill="none">
        <ellipse cx="12" cy="8" rx="11" ry="6.500" fill="#f3f3f3" stroke="#c8385a" strokeWidth="1.600" transform="rotate(-12 12 8)" />
        <path d="M9 4l9 11M14 3l-1 12" stroke="#9a9a9a" /><circle cx="13" cy="18" r="2.600" stroke="#3a7fc8" strokeWidth="1.800" /><circle cx="20" cy="16" r="2.600" stroke="#3a7fc8" strokeWidth="1.800" />
      </svg>
    ),
  },
  {
    name: 'Power BI', state: '', icon: (
      <svg viewBox="0 0 24 24" className="h-6 w-6" fill="none">
        <rect width="24" height="24" fill="#f2c811" />
        <path d="M7 17H5V7h14v10h-1M8.500 18v-3M11 18v-4M13.500 18v-5.500M16 18v-8" stroke="#1f1f1f" strokeWidth="1.400" />
      </svg>
    ),
  },
  {
    name: 'Skype', state: 'open', icon: (
      <svg viewBox="0 0 24 24" className="h-[23px] w-[23px]">
        <circle cx="8" cy="8" r="7.500" fill="#0aa5e6" /><circle cx="16" cy="16" r="7.500" fill="#0aa5e6" /><circle cx="12" cy="12" r="10" fill="#0aa5e6" />
        <text x="7.500" y="17.500" fontSize="15" fontWeight="bold" fill="#fff">S</text>
      </svg>
    ),
  },
  {
    name: 'Запись экрана', state: 'open', icon: (
      <svg viewBox="0 0 24 24" className="h-6 w-6" fill="none">
        <circle cx="11" cy="11" r="8.500" stroke="#5c5c5c" strokeWidth="5" /><circle cx="16" cy="17" r="6.500" fill="#e5141c" />
      </svg>
    ),
  },
  {
    name: 'Видеоредактор', state: 'open', icon: (
      <svg viewBox="0 0 24 24" className="h-6 w-6">
        <rect x="1" y="1" width="22" height="22" fill="#123c3b" stroke="#35a597" strokeWidth="1.500" />
        <path d="M4 3l13 9L4 21z" fill="#3fc1ab" /><path d="M19 4v16" stroke="#35a597" strokeWidth="2" strokeDasharray="2 2" />
      </svg>
    ),
  },
  {
    name: 'PowerPoint', state: 'open', icon: (
      <svg viewBox="0 0 24 22" className="h-[22px] w-6">
        <circle cx="14" cy="11" r="10" fill="#d35230" /><path d="M14 1a10 10 0 0 1 10 10H14z" fill="#ff8f6b" />
        <rect y="5" width="12" height="12" rx="1" fill="#b83b1d" />
        <text x="2.500" y="15" fontSize="11" fontWeight="bold" fill="#fff">P</text>
      </svg>
    ),
  },
];

const Taskbar = () => (
  <footer className="relative z-20 flex h-10 shrink-0 items-stretch bg-[#1f1f1f] text-[11px] text-white">
    <button aria-label="Пуск" className="flex w-12 items-center justify-center">
      <svg viewBox="0 0 16 16" className="h-4 w-4" fill="#fff">
        <path d="M0 2.300L6.500 1.400v6.200H0zM7.300 1.300L16 0v7.600H7.300zM0 8.400h6.500v6.200L0 13.700zM7.300 8.400H16V16l-8.700-1.300z" />
      </svg>
    </button>
    <button aria-label="Поиск Windows" className="flex w-12 items-center justify-center"><Magnifier className="h-4 w-4" /></button>
    <button aria-label="Представление задач" className="mr-[2px] flex w-12 items-center justify-center">
      <svg viewBox="0 0 16 16" className="h-4 w-4" fill="none" stroke="#fff">
        <path d="M.5 0v2.500h10V0M.5 16v-2.500h10V16M.5 5h10v6H.5zM14.500 0v3M14.500 8v8" /><path d="M13 4h3v3h-3z" fill="#fff" stroke="none" />
      </svg>
    </button>
    {taskbarApps.map(({ name, state, icon }) => (
      <button
        key={name}
        aria-label={name}
        className={
          state === 'active'
            ? 'flex w-[49px] flex-col items-center justify-end bg-[#4a4a4a]'
            : 'flex w-[49px] flex-col items-center justify-end'
        }
      >
        <span className="flex flex-1 items-center">{icon}</span>
        {state === 'open' && <span className="-mt-[2px] h-[2px] w-10 bg-[#7ab6ee]" />}
        {state === 'active' && <span className="-mt-[2px] h-[2px] w-full bg-[#7ab6ee]" />}
      </button>
    ))}
    <div className="ml-auto flex items-center pr-[25px]">
      <ChevronUp className="h-4 w-4" strokeWidth={2} />
      <svg viewBox="0 0 16 12" className="ml-2 h-3 w-4" fill="none" stroke="#fff">
        <path d="M6 3.500h8.500v7H4V8M15.500 5.500v3M1.500 0v2M4.500 0v2M.5 2.500h5v2.500L3 6.500.5 5zM3 6v4" />
      </svg>
      <svg viewBox="0 0 14 14" className="ml-[10px] h-[14px] w-[14px]" fill="none" stroke="#fff">
        <path d="M1 11Q4 4 13 1.500M3.500 12Q6 6.500 13 5M6.500 13Q8 9.500 13 8.500" /><circle cx="11.500" cy="12" r="1.500" fill="#fff" stroke="none" />
      </svg>
      <svg viewBox="0 0 16 14" className="ml-[9px] h-[14px] w-4" fill="none" stroke="#fff">
        <path d="M.5 5h2.500l3.500-3.500v11L3 9H.5zM8.500 5q1.500 2 0 4M10.500 3.500q3 3.500 0 7" /><path d="M12.500 2q4 5 0 10" stroke="#999" />
      </svg>
      <svg viewBox="0 0 14 14" className="ml-2 h-[14px] w-[14px]">
        <rect width="14" height="14" rx="4" fill="#d9fbf8" /><path d="M4 7h6c0-4-6-4-6 0s4 4 6 2" fill="none" stroke="#1a9c98" strokeWidth="1.800" />
      </svg>
      <svg viewBox="0 0 22 12" className="ml-[10px] h-3 w-[22px]" fill="none" stroke="#fff">
        <rect x=".5" y=".5" width="21" height="11" /><path d="M3 3.500h16M3 6h16" strokeDasharray="1.500 1" /><path d="M6 9h10" />
      </svg>
      <span className="ml-[11px] text-[12px]">ENG</span>
      <div className="ml-[11px] flex flex-col items-center pt-px leading-[18px]">
        <span>1:03</span>
        <span>08.01.2020</span>
      </div>
      <button aria-label="Уведомления" className="relative ml-[17px] h-4 w-4">
        <svg viewBox="0 0 16 16" className="h-4 w-4">
          <path d="M0 0h16v12H7l-3 4v-4H0z" fill="#fff" /><path d="M3 3.500h10M3 6h10M3 8.500h6" stroke="#1f1f1f" />
        </svg>
        <span className="absolute left-[7px] top-[7px] flex h-4 w-4 items-center justify-center rounded-full border border-[#8a8a8a] bg-[#2b2b2b] text-[10px] leading-none">3</span>
      </button>
    </div>
  </footer>
);

const App: React.FC = () => (
  <div className="flex h-screen min-w-[1200px] flex-col overflow-hidden bg-[#1f1f1f] font-['Segoe_UI','Open_Sans','Noto_Sans',sans-serif]">
    <div className="flex min-h-0 flex-1">
      <BrowserWindow />
      <PresentationWindow />
    </div>
    <Taskbar />
  </div>
);

export default App;
